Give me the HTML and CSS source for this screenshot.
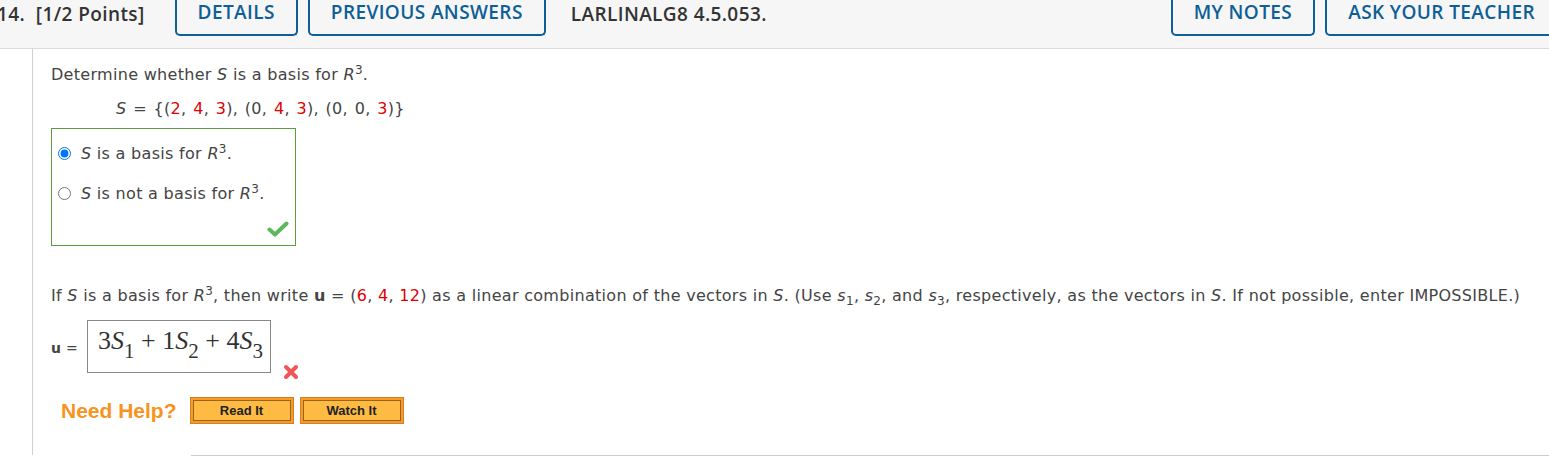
FILE: index.html
```html
<!DOCTYPE html>
<html lang="en">
<head>
    <meta charset="UTF-8">
    <title>Question 14</title>
    <link rel="stylesheet" href="styles.css">
</head>
<body>

    <header class="qbar">
        <span class="qnum">14.&nbsp; [1/2 Points]</span>
        <a class="tab">DETAILS</a>
        <a class="tab">PREVIOUS ANSWERS</a>
        <span class="qcode">LARLINALG8 4.5.053.</span>
        <span class="spacer"></span>
        <a class="tab">MY NOTES</a>
        <a class="tab last">ASK YOUR TEACHER</a>
    </header>

    <section class="qbody">
        <p class="line">Determine whether <i>S</i> is a basis for <i>R</i><sup>3</sup>.</p>
        <p class="line set"><i>S</i> = {(<span class="red">2</span>, <span class="red">4</span>, <span class="red">3</span>), (0, <span class="red">4</span>, <span class="red">3</span>), (0, 0, <span class="red">3</span>)}</p>

        <div class="choices">
            <label class="choice"><input type="radio" name="basis" checked><span><i>S</i> is a basis for <i>R</i><sup>3</sup>.</span></label>
            <label class="choice"><input type="radio" name="basis"><span><i>S</i> is not a basis for <i>R</i><sup>3</sup>.</span></label>
            <svg class="check" width="22" height="16" viewBox="0 0 22 16">
                <path d="M2.5 8.5 L8 13.5 L19.5 2.5" fill="none" stroke="#5cb85c" stroke-width="4" stroke-linecap="round" stroke-linejoin="round"/>
            </svg>
        </div>

        <p class="line part2">If <i>S</i> is a basis for <i>R</i><sup>3</sup>, then write <b>u</b> = (<span class="red">6</span>, <span class="red">4</span>, <span class="red">12</span>) as a linear combination of the vectors in <i>S</i>. (Use <i>s</i><sub>1</sub>, <i>s</i><sub>2</sub>, and <i>s</i><sub>3</sub>, respectively, as the vectors in <i>S</i>. If not possible, enter IMPOSSIBLE.)</p>

        <div class="answer">
            <span class="ulabel"><b>u</b> =</span>
            <div class="mathbox">3<i>S</i><sub>1</sub> + 1<i>S</i><sub>2</sub> + 4<i>S</i><sub>3</sub></div>
            <svg class="wrong" width="16" height="16" viewBox="0 0 16 16">
                <path d="M3 3 L13 13 M13 3 L3 13" stroke="#f05656" stroke-width="4" stroke-linecap="round"/>
            </svg>
        </div>

        <div class="help">
            <span class="needhelp">Need Help?</span>
            <a class="helpbtn"><span>Read It</span></a>
            <a class="helpbtn"><span>Watch It</span></a>
        </div>
    </section>

    <div class="bottomrule"></div>

</body>
</html>
```

FILE: styles.css
```css
body {
    margin: 0;
    padding: 0;
    background-color: #fff;
    font-family: "DejaVu Sans", Verdana, sans-serif;
    color: #444;
    overflow: hidden;
}

/* question header */
.qbar {
    display: flex;
    align-items: flex-start;
    height: 48px;
    background-color: #f6f6f6;
    border-bottom: 1px solid #dcdcdc;
    font-family: "Open Sans", sans-serif;
    font-weight: 600;
    font-size: 19px;
    letter-spacing: 0.4px;
    margin-left: -3px;
    margin-right: -9px;
}

.qnum {
    color: #333;
    padding-top: 1px;
    margin-right: 30px;
}

.tab {
    display: block;
    height: 34px;
    line-height: 24px;
    padding: 0 21px;
    border: 2px solid #0e5f97;
    border-top: none;
    border-radius: 0 0 5px 5px;
    color: #0e5f97;
    margin-right: 10px;
}

.tab.last {
    margin-right: 0;
}

.qcode {
    color: #333;
    padding-top: 1px;
    margin-left: 15px;
}

.spacer {
    flex: 1;
}

/* question content */
.qbody {
    margin-left: 32px;
    border-left: 1px solid #d0d0d0;
    padding: 15px 0 31px 18px;
    font-size: 16px;
    letter-spacing: 0.3px;
}

.line {
    margin: 0;
    line-height: 22px;
}

sup {
    font-size: 12px;
    vertical-align: 6px;
    line-height: 0;
}

sub {
    font-size: 12px;
    vertical-align: -4px;
    line-height: 0;
}

.red {
    color: #e00000;
}

.set {
    margin-top: 12px;
    padding-left: 65px;
    word-spacing: 1.3px;
}

.choices {
    position: relative;
    width: 239px;
    height: 112px;
    margin-top: 8px;
    padding: 4px 0 0 4px;
    border: 1px solid #5c9e3c;
}

.choice {
    display: flex;
    align-items: center;
    height: 40px;
}

.choice input {
    width: 13px;
    height: 13px;
    margin: 0 10px 0 2px;
}

.check {
    position: absolute;
    right: 6px;
    bottom: 8px;
}

.part2 {
    margin-top: 39px;
}

.answer {
    display: flex;
    align-items: flex-start;
    margin-top: 13px;
}

.ulabel {
    font-size: 14px;
    margin-top: 20px;
    margin-right: 9px;
}

.mathbox {
    width: 172px;
    height: 51px;
    padding-left: 10px;
    border: 1px solid #888;
    font-family: "Liberation Serif", "Times New Roman", serif;
    font-size: 26px;
    letter-spacing: 0;
    line-height: 40px;
    color: #333;
}

.mathbox sub {
    font-size: 21px;
    vertical-align: -9px;
}

.wrong {
    margin-top: 44px;
    margin-left: 12px;
}

.help {
    display: flex;
    align-items: center;
    margin-top: 17px;
    padding-left: 10px;
}

.needhelp {
    font-family: "Liberation Sans", Arial, sans-serif;
    font-weight: bold;
    font-size: 21px;
    letter-spacing: 0;
    color: #f7931e;
    margin-right: 13px;
}

.helpbtn {
    display: block;
    border: 1px solid #d9801c;
    background-color: #f59b2c;
    padding: 2px;
    margin-right: 6px;
}

.helpbtn span {
    display: block;
    width: 96px;
    height: 19px;
    line-height: 19px;
    border: 1px solid #9b6418;
    background-color: #fdbb43;
    text-align: center;
    font-family: "Liberation Sans", Arial, sans-serif;
    font-weight: bold;
    font-size: 13px;
    letter-spacing: 0;
    color: #222;
}

.bottomrule {
    margin-left: 191px;
    border-top: 1px solid #ccc;
}
```
